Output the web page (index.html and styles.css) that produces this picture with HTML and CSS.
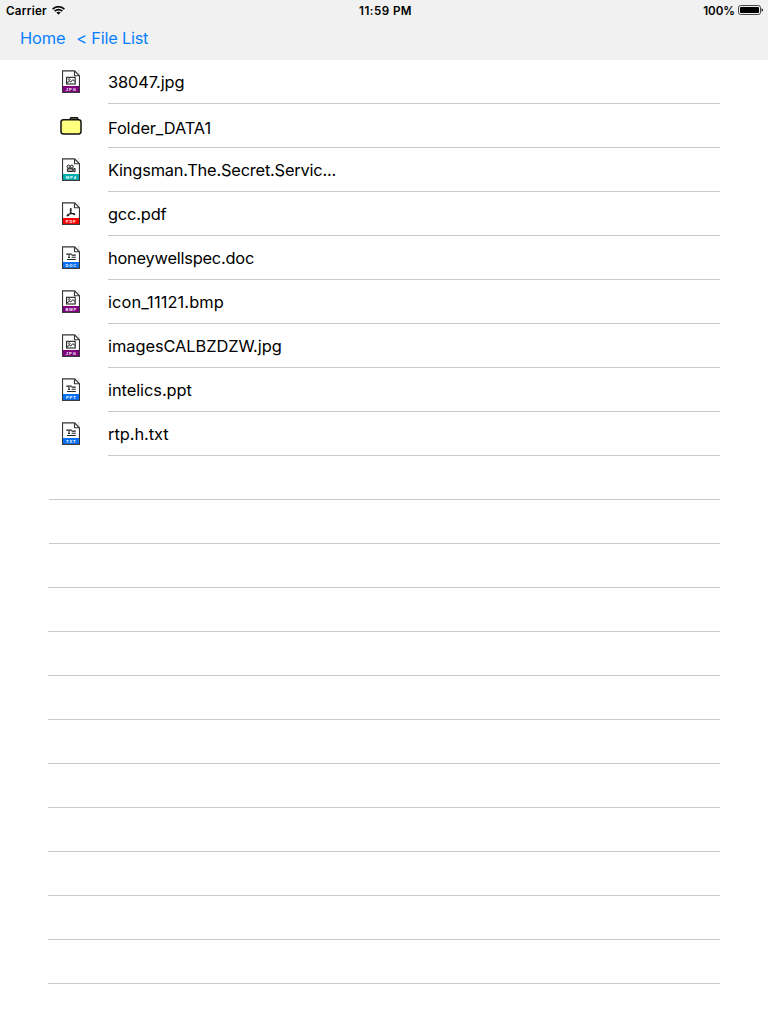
FILE: index.html
```
<!DOCTYPE html>
<html lang="en">
<head>
<meta charset="utf-8">
<title>File List</title>
<link rel="stylesheet" href="styles.css">
</head>
<body>
<svg class="defs" width="0" height="0" aria-hidden="true">
  <symbol id="page" viewBox="0 0 18 23">
    <path d="M12.5 0H18V5.5Z" fill="#eee"/>
    <path d="M.5 22.5V.8H12.5L17.5 5.8V22.5Z" fill="#fff" stroke="#333" stroke-width="1.15"/>
    <path d="M12.5 1V5.7H17.3" fill="none" stroke="#333" stroke-width="1.1"/>
    <path d="M1 16H17V22H1Z" fill="currentColor"/>
    <path d="M.5 22.3H17.5" stroke="#444" stroke-width=".8"/>
  </symbol>
  <symbol id="image" viewBox="0 0 18 23">
    <rect x="4.6" y="7.3" width="8.6" height="6.7" fill="none" stroke="#222" stroke-width="1.1"/>
    <circle cx="7.3" cy="9.5" r=".9" fill="none" stroke="#222" stroke-width=".8"/>
    <path d="M5 12.7L7.5 11.2L8.8 12L10.8 9.6L13 11.7" fill="none" stroke="#222" stroke-width="1"/>
  </symbol>
  <symbol id="lines" viewBox="0 0 18 23">
    <path d="M5 9V8H9V9M7 8V12M6 11.5H8M9.6 9.1H13.8M9.6 11.3H13.8M5 13.5H13.8" fill="none" stroke="#222" stroke-width="1.1"/>
  </symbol>
  <symbol id="video" viewBox="0 0 18 23">
    <circle cx="6.6" cy="8.6" r="1.5" fill="#ddd" stroke="#222"/>
    <circle cx="9.8" cy="8.6" r="1.5" fill="#ddd" stroke="#222"/>
    <path d="M5.4 10.7H10.8V13.5H5.4ZM11 11.4L13 10.2V14L11 12.8" fill="#aaa" stroke="#222" stroke-width="1"/>
  </symbol>
  <symbol id="acrobat" viewBox="0 0 18 23">
    <path d="M8.4 6.8C7.6 9.4 9.4 12 12.6 12.7C13.4 11.6 11 11.1 8.1 11.8C5.7 12.4 4.5 13.7 5.3 14C6.7 14 9.8 9.5 9.1 6.7Z" fill="none" stroke="#222" stroke-width="1.05"/>
  </symbol>
</svg>

<header class="header">
  <div class="status">
    <div class="status-left"><span class="carrier">Carrier</span>
      <svg class="wifi" width="13" height="9" viewBox="0 0 13 9"><path d="M.6 3.1Q6.5-1.7 12.4 3.1M2.6 5.2Q6.5 2 10.4 5.2" fill="none" stroke="#000" stroke-width="1.6"/><path d="M4.4 6.6Q6.5 5 8.6 6.6L6.5 8.8Z"/></svg>
    </div>
    <span class="time">11:59 PM</span>
    <div class="status-right"><span class="percent">100%</span>
      <svg width="25" height="10" viewBox="0 0 25 10"><rect x=".5" y=".5" width="22" height="9" rx="2" fill="none" stroke="#333" stroke-width=".9"/><rect x="2" y="2" width="19" height="6" rx=".7"/><path d="M23.6 3.2Q25 3.8 25 5T23.6 6.8Z"/></svg>
    </div>
  </div>
  <nav class="nav"><a class="home">Home</a><a class="back">&lt; File List</a></nav>
</header>

<main class="list">
  <div class="row"><svg class="icon purple" viewBox="0 0 18 23"><use href="#page"/><use href="#image"/><text x="9.3" y="20.6">JPG</text></svg><div class="cell"><span class="n1">38047.jpg</span></div></div>
  <div class="row folder-row"><svg class="folder" viewBox="0 0 22 19"><path d="M9.5 4L11 1.7H17.3L18.6 4" fill="#aaa653" stroke="#111" stroke-width="1.4"/><rect x="1" y="3.7" width="20" height="14.2" rx="2.4" fill="#ffff80" stroke="#111" stroke-width="1.5"/></svg><div class="cell"><span class="n2">Folder_DATA1</span></div></div>
  <div class="row"><svg class="icon teal" viewBox="0 0 18 23"><use href="#page"/><use href="#video"/><text x="9.3" y="20.6">MP4</text></svg><div class="cell"><span class="n3">Kingsman.The.Secret.Servic...</span></div></div>
  <div class="row"><svg class="icon red" viewBox="0 0 18 23"><use href="#page"/><use href="#acrobat"/><text x="9.3" y="20.6">PDF</text></svg><div class="cell"><span class="n4">gcc.pdf</span></div></div>
  <div class="row"><svg class="icon blue" viewBox="0 0 18 23"><use href="#page"/><use href="#lines"/><text x="9.3" y="20.6">DOC</text></svg><div class="cell"><span class="n5">honeywellspec.doc</span></div></div>
  <div class="row"><svg class="icon purple" viewBox="0 0 18 23"><use href="#page"/><use href="#image"/><text x="9.3" y="20.6">BMP</text></svg><div class="cell"><span class="n6">icon_11121.bmp</span></div></div>
  <div class="row"><svg class="icon purple" viewBox="0 0 18 23"><use href="#page"/><use href="#image"/><text x="9.3" y="20.6">JPG</text></svg><div class="cell"><span class="n7">imagesCALBZDZW.jpg</span></div></div>
  <div class="row"><svg class="icon blue" viewBox="0 0 18 23"><use href="#page"/><use href="#lines"/><text x="9.3" y="20.6">PPT</text></svg><div class="cell"><span class="n8">intelics.ppt</span></div></div>
  <div class="row"><svg class="icon blue" viewBox="0 0 18 23"><use href="#page"/><use href="#lines"/><text x="9.3" y="20.6">TXT</text></svg><div class="cell"><span class="n9">rtp.h.txt</span></div></div>
  <div class="empty inset"></div><div class="empty inset"></div><div class="empty"></div><div class="empty"></div><div class="empty"></div><div class="empty"></div><div class="empty"></div><div class="empty"></div><div class="empty"></div><div class="empty"></div><div class="empty"></div><div class="empty"></div>
</main>
</body>
</html>
```

FILE: styles.css
```
* { box-sizing: border-box; }
body {
  margin: 0;
  height: 1024px;
  overflow: hidden;
  background: #fff;
  color: #000;
  font-family: Inter, "Liberation Sans", sans-serif;
}
.defs { display: block; }
.header { height: 60px; background: #f1f1f1; }
.status {
  display: grid;
  grid-template-columns: 1fr auto 1fr;
  height: 20px;
  padding: 0 5px 0 6px;
  font-size: 11.6px;
  line-height: 22px;
  font-weight: 600;
}
.carrier { letter-spacing: .25px; }
.status-left { display: flex; gap: 5px; }
.wifi { margin-top: 6px; }
.time { padding-left: 2px; letter-spacing: .45px; }
.status-right { display: flex; justify-content: flex-end; gap: 3px; }
.status-right svg { margin-top: 5px; }
.nav {
  display: flex;
  gap: 11px;
  padding-left: 20px;
  font-size: 16.4px;
  line-height: 37px;
  color: #087fff;
  white-space: nowrap;
}
.home { letter-spacing: -.15px; }
.back { letter-spacing: -.24px; }
.list { padding: 0 48px; }
.row { display: flex; height: 44px; padding-left: 14px; }
.icon { width: 18px; height: 23px; margin: 10px 28px 0 0; flex: none; }
.icon text {
  font: bold 4.1px "Liberation Sans", sans-serif;
  letter-spacing: .9px;
  text-anchor: middle;
  fill: #fff;
}
.purple { color: #800080; }
.teal { color: #00aeae; }
.red { color: #f00; }
.blue { color: #0870f5; }
.folder-row { padding-left: 12px; }
.folder { width: 22px; height: 19px; margin: 12px 26px 0 0; flex: none; }
.cell {
  flex: 1;
  height: 44px;
  border-bottom: 1px solid #c8c7cc;
  font-size: 16.4px;
  line-height: 45px;
  white-space: nowrap;
}
.n1 { letter-spacing: -.08px; }
.n2 { letter-spacing: -.12px; }
.n3 { letter-spacing: -.2px; }
.n4 { letter-spacing: -.18px; }
.n5 { letter-spacing: -.22px; }
.n6 { letter-spacing: .11px; }
.n7 { letter-spacing: -.05px; }
.n8 { letter-spacing: -.06px; }
.n9 { letter-spacing: -.03px; }
.folder-row .cell { line-height: 49px; }
.empty { height: 44px; border-bottom: 1px solid #c8c7cc; }
.inset { margin-left: 1px; }
```
